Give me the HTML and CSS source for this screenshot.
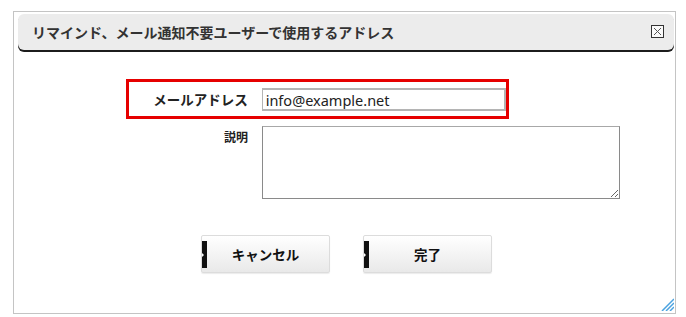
FILE: index.html
```html
<!DOCTYPE html>
<html lang="ja">

<head>
    <meta charset="utf-8">
    <meta name="viewport" content="width=device-width, initial-scale=1.0">
    <title>アドレス登録</title>
    <link rel="stylesheet" href="styles.css">
</head>

<body>
    <div class="dialog">
        <header class="titlebar">
            <h1>リマインド、メール通知不要ユーザーで使用するアドレス</h1>
            <button class="close" aria-label="閉じる">
                <svg width="13" height="13" viewBox="0 0 13 13">
                    <rect x="0.5" y="0.5" width="12" height="12" fill="#fafafa" stroke="#333" />
                    <path d="M3 3 L10 10 M10 3 L3 10" stroke="#555" stroke-width="1" />
                </svg>
            </button>
        </header>

        <form class="form">
            <div class="row mark">
                <label for="mail">メールアドレス</label>
                <input id="mail" type="text" value="info@example.net">
            </div>
            <div class="row desc">
                <label for="memo">説明</label>
                <textarea id="memo"></textarea>
            </div>
            <div class="buttons">
                <button type="button" class="btn">キャンセル</button>
                <button type="button" class="btn">完了</button>
            </div>
        </form>

        <!-- リサイズのつまみ -->
        <svg class="grip" width="13" height="13" viewBox="0 0 13 13">
            <path d="M1 13 L13 1 M5 13 L13 5 M9 13 L13 9" stroke="#4ba3e0" stroke-width="1.5" />
        </svg>
    </div>
</body>

</html>
```

FILE: styles.css
```css
body {
    margin: 0;
    background-color: #fff;
    font-family: "Noto Sans CJK JP", sans-serif;
    color: #222;
}

.dialog {
    position: relative;
    box-sizing: border-box;
    width: 663px;
    height: 303px;
    margin: 11px 0 0 13px;
    padding: 2px 1px 0 4px;
    border: 1px solid #c4c4c4;
    background-color: #fff;
}

.titlebar {
    display: flex;
    align-items: center;
    justify-content: space-between;
    height: 36px;
    padding: 0 10px 0 14px;
    background-color: #ececec;
    border-radius: 6px;
    box-shadow: 0 2px 0 #1c1c1c;
}

.titlebar h1 {
    margin: 0;
    font-size: 14px;
    font-weight: bold;
    color: #333;
}

.close {
    display: flex;
    padding: 0;
    border: none;
    background-color: transparent;
    margin-top: -2px;
}

.form {
    padding-top: 29px;
}

.row {
    display: flex;
}

.row label {
    box-sizing: border-box;
    width: 119px;
    margin-right: 14px;
    text-align: right;
    font-size: 13px;
    font-weight: bold;
    color: #222;
}

.mark {
    box-sizing: border-box;
    width: 383px;
    height: 40px;
    margin-left: 108px;
    align-items: center;
    border: 3px solid #e60000;
}

.mark label {
    font-size: 13.5px;
}

.mark input {
    box-sizing: border-box;
    width: 245px;
    height: 23px;
    margin: 1px 0 0 0;
    padding: 0 3px;
    border: 2px solid #b4b4b4;
    border-width: 2px 2px 2px 1px;
    font-family: "Noto Sans", sans-serif;
    font-size: 14.5px;
    color: #222;
}

.desc {
    margin: 7px 0 0 111px;
}

.desc label {
    padding-top: 2px;
    font-size: 12px;
}

.desc textarea {
    box-sizing: border-box;
    width: 358px;
    height: 73px;
    border: 1px solid #8a8a8a;
    border-top-color: #a8a8a8;
}

.buttons {
    display: flex;
    gap: 33px;
    margin: 36px 0 0 183px;
}

.btn {
    position: relative;
    width: 129px;
    height: 38px;
    border: 1px solid #dcdcdc;
    border-radius: 2px;
    background: linear-gradient(#ffffff, #e9e9e9);
    box-shadow: 0 1px 1px rgba(0, 0, 0, 0.08);
    font-family: "Noto Sans CJK JP", sans-serif;
    font-size: 13.5px;
    font-weight: bold;
    color: #111;
    cursor: pointer;
}

.btn::before {
    content: "";
    position: absolute;
    left: 0;
    top: 5px;
    width: 5px;
    height: 27px;
    background-color: #111;
}

.btn::after {
    content: "";
    position: absolute;
    left: 0;
    top: 17px;
    border: 2px solid transparent;
    border-left-color: #fff;
}

.grip {
    position: absolute;
    right: 1px;
    bottom: 2px;
}
```
